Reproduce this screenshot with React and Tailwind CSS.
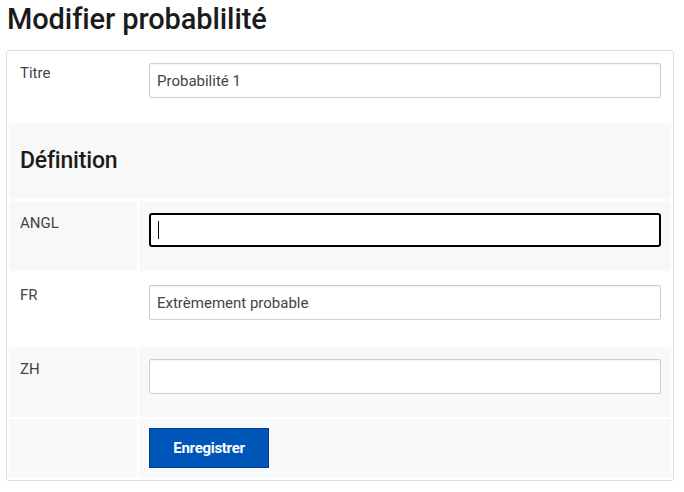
import React from 'react';

const rows = [
  { label: 'ANGL', value: '', focused: true, bg: 'bg-[#f8f8f8]', h: 'h-[70px]' },
  { label: 'FR', value: 'Extrèmement probable', bg: 'bg-white', h: 'h-[72px]' },
  { label: 'ZH', value: '', bg: 'bg-[#f8f8f8]', h: 'h-[70px]' },
];

const Field = ({ value, focused }) => (
  <div className="relative">
    <input
      defaultValue={value}
      className={
        focused
          ? 'w-full h-[34px] rounded-[3px] border-2 border-black bg-white px-[7px] text-[15px] text-[#444] outline-none'
          : 'w-full h-[35px] rounded-[2px] border border-[#cfcfcf] bg-white px-[7px] text-[15px] text-[#444] shadow-[inset_0_1px_2px_rgba(0,0,0,0.06)] outline-none'
      }
    />
    {focused && <span className="absolute left-[9px] top-[8px] h-[18px] w-px bg-black" />}
  </div>
);

const App = () => {
  return (
    <div className="min-h-screen bg-white font-['Roboto',sans-serif] text-[#222]">
      <h1 className="pl-[7px] pt-[1px] h-[50px] text-[29px] leading-[36px] font-medium tracking-[-0.1px] text-[#1b1b1b]">
        Modifier probablilité
      </h1>

      <div className="mx-[6px] w-[668px] rounded-[3px] border border-[#dcdcdc] p-[2px] flex flex-col gap-[2px]">
        {/* Titre */}
        <div className="flex gap-[2px] bg-white h-[68px]">
          <div className="w-[128px] pl-[11px] pt-[10px] text-[15px] leading-[20px] text-[#444]">Titre</div>
          <div className="flex-1 px-[10px] pt-[10px]">
            <Field value="Probabilité 1" />
          </div>
        </div>

        {/* Définition heading */}
        <div className="h-[76px] bg-[#f8f8f8] flex items-center pl-[11px]">
          <h2 className="text-[23px] font-medium text-[#1b1b1b] tracking-[-0.2px]">Définition</h2>
        </div>

        {rows.map((row) => (
          <div key={row.label} className={`flex gap-[2px] ${row.h}`}>
            <div className={`w-[128px] pl-[11px] pt-[12px] text-[15px] leading-[20px] text-[#444] ${row.bg}`}>{row.label}</div>
            <div className={`flex-1 px-[10px] pt-[12px] ${row.bg}`}>
              <Field value={row.value} focused={row.focused} />
            </div>
          </div>
        ))}

        {/* Actions */}
        <div className="flex gap-[2px] h-[59px]">
          <div className="w-[128px] bg-[#f9f9f9]" />
          <div className="flex-1 bg-[#f9f9f9] px-[10px] pt-[9px]">
            <button className="h-[40px] w-[120px] border border-[#003d8a] bg-[#0055b8] text-white text-[15px] font-bold tracking-[-0.3px]">
              Enregistrer
            </button>
          </div>
        </div>
      </div>
    </div>
  );
};

export default App;
